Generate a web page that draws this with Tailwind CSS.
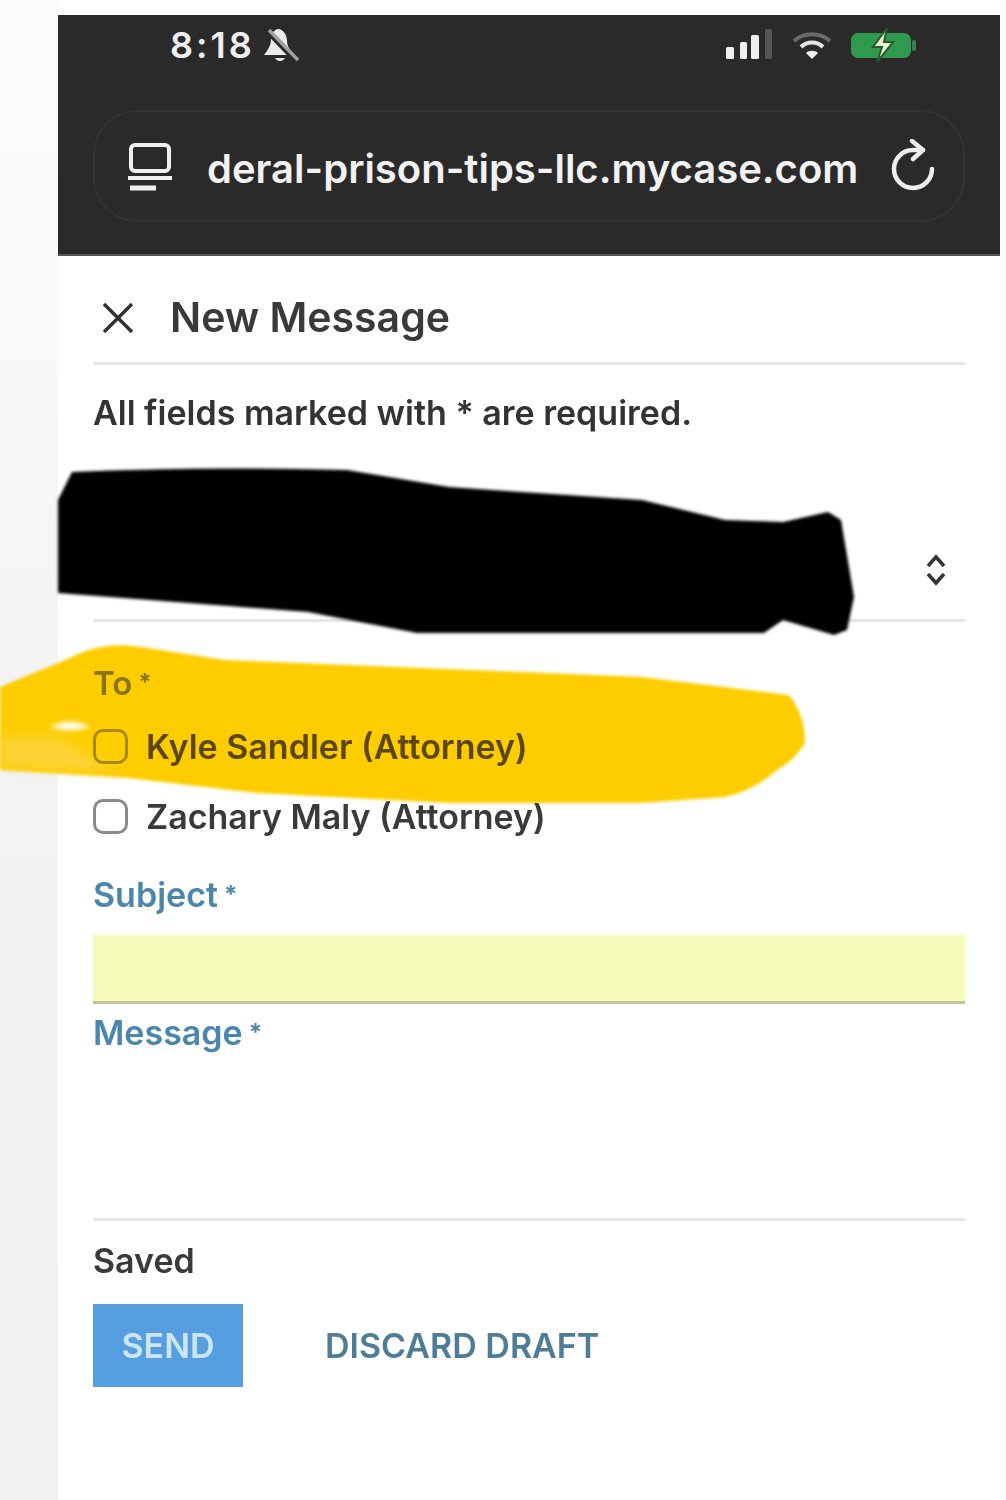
<!DOCTYPE html>
<html lang="en">
<head>
    <meta charset="UTF-8">
    <meta name="viewport" content="width=device-width, initial-scale=1.0">
    <title>New Message</title>
    <script src="https://cdn.jsdelivr.net/npm/@tailwindcss/browser@4"></script>
</head>
<body class="bg-white font-['Inter',sans-serif] overflow-hidden">
<div class="relative flex w-[1006px] h-[1500px] overflow-hidden blur-[0.7px]">
    <div class="w-[58px] shrink-0 bg-linear-to-b from-[#fcfcfc] via-[#f3f3f3] to-[#f1f1f1]"></div>

    <!-- yellow marker sits under the form text -->
    <svg class="absolute inset-0 z-0 pointer-events-none" width="1006" height="1500" viewBox="0 0 1006 1500">
        <path class="blur-[1.5px]" d="M85 651Q115 642 141 647L225 660L642 677L789 695Q805 715 805 743Q795 760 777 770Q755 790 725 797L642 803L449 803L257 793L128 778L0 770L0 687L58 663z" fill="#fdcd00"/>
        <path class="blur-[6px]" d="M58 738L118 772L0 766L0 738z" fill="#fbd75a" opacity="0.6"/>
        <path class="blur-[2px]" d="M50 727Q70 716 90 727Q70 734 50 727z" fill="#fffbe8"/>
    </svg>

    <div class="relative z-10 w-[942px] shrink-0 pt-[15px]">
        <!-- browser chrome -->
        <div class="h-[241px] bg-[#2a2a2a] px-[35px] border-b-2 border-[#555]">
            <div class="flex items-center justify-between h-[60px] pl-[77px] pr-[46px]">
                <div class="flex items-center gap-[8px]">
                    <span class="text-[36px] font-semibold tracking-[3px] text-[#efefef] leading-none">8:18</span>
                    <svg width="36" height="38" viewBox="0 0 36 38" fill="none">
                        <path d="M15 3C10 4 8 9 8 14c0 5-3 10-7 15l29 0c-3-5-6-9-6-14C24 9 20 3 15 3z" fill="#ececec"/>
                        <path d="M12 32c2 4 8 4 10 0z" fill="#ececec"/>
                        <path d="M4 5l30 31" stroke="#2a2a2a" stroke-width="5"/>
                        <path d="M6 4l29 30" stroke="#a0a0a0" stroke-width="3.5"/>
                    </svg>
                </div>
                <div class="flex items-center">
                    <svg width="48" height="32" viewBox="0 0 48 32" fill="#efefef">
                        <rect x="0" y="18" width="8" height="12" rx="1.5"/>
                        <rect x="14" y="13" width="7" height="17" rx="1.5"/>
                        <rect x="25" y="6" width="8" height="24" rx="1.5"/>
                        <rect x="39" y="0" width="7" height="30" rx="1.5" fill="#555"/>
                    </svg>
                    <svg class="ml-[17px]" width="42" height="30" viewBox="0 0 42 30" fill="none">
                        <path d="M3 11c10-9 26-9 36 0" stroke="#6a6a6a" stroke-width="4"/>
                        <path d="M10 17c6-6 16-6 22 0" stroke="#e6e6e6" stroke-width="4"/>
                        <path d="M21 29l-6-6c3-3 9-3 12 0z" fill="#efefef"/>
                    </svg>
                    <svg class="ml-[16px]" width="70" height="36" viewBox="0 0 70 36" fill="none">
                        <rect x="2" y="6" width="60" height="25" rx="7" fill="#2f9a4d"/>
                        <rect x="63" y="13" width="4" height="11" rx="2" fill="#3c7f50"/>
                        <path d="M38 1L24 20h9l-5 15 16-20h-9z" fill="#e8efd2" stroke="#26592f" stroke-width="2"/>
                    </svg>
                </div>
            </div>
            <div class="flex items-center h-[112px] mt-[35px] rounded-[44px] border-2 border-[#333] pl-[32px] pr-[26px]">
                <svg class="shrink-0 mt-[6px]" width="46" height="54" viewBox="0 0 46 54" fill="none">
                    <rect x="4" y="3" width="38" height="26" rx="4" stroke="#f0f0f0" stroke-width="4"/>
                    <path d="M1 36h44" stroke="#f0f0f0" stroke-width="4"/>
                    <path d="M3 46h26" stroke="#f0f0f0" stroke-width="5"/>
                </svg>
                <div class="ml-[34px] flex-1 pt-[5px] text-[40px] font-semibold text-[#f2f2f2] whitespace-nowrap overflow-hidden">deral-prison-tips-llc.mycase.com</div>
                <svg class="shrink-0" width="46" height="54" viewBox="0 -3 46 54" fill="none">
                    <path d="M41 27A19 19 0 1 1 22 8H32" stroke="#efefef" stroke-width="4.5" stroke-linecap="round"/>
                    <path d="M21 -1L32 8 22 17" stroke="#efefef" stroke-width="4.5" stroke-linecap="round" stroke-linejoin="round"/>
                </svg>
            </div>
        </div>

        <!-- form -->
        <div class="px-[35px]">
            <div class="flex items-center h-[109px] pt-[18px] border-b-[3px] border-[#e6e6e6]">
                <svg class="ml-[9px]" width="32" height="32" viewBox="0 0 32 32" fill="none">
                    <path d="M2 2l28 28M30 2L2 30" stroke="#333" stroke-width="3.5"/>
                </svg>
                <h1 class="ml-[36px] text-[41px] font-semibold text-[#3a3a3a]">New Message</h1>
            </div>
            <p class="h-[100px] pt-[26px] text-[34px] leading-[44px] font-semibold text-[#333] whitespace-nowrap">All fields marked with * are required.</p>

            <div class="flex items-center justify-end h-[157px] pt-[55px] pr-[17px] border-b-[3px] border-[#e6e6e6]">
                <svg width="24" height="34" viewBox="0 0 24 34" fill="none">
                    <path d="M4 13l8-9 8 9M4 21l8 9 8-9" stroke="#333" stroke-width="3.5"/>
                </svg>
            </div>

            <div class="h-[40px] mt-[41px] text-[33px] leading-[40px] text-[#8a7412] font-semibold">To<span class="ml-[6px] align-top text-[24px] font-bold">*</span></div>
            <label class="flex items-center h-[36px] mt-[25px]">
                <span class="w-[35px] h-[35px] rounded-[10px] border-[3px] border-[#a68a10]"></span>
                <span class="ml-[18px] text-[34px] font-semibold text-[#5c4708]">Kyle Sandler (Attorney)</span>
            </label>
            <label class="flex items-center h-[36px] mt-[34px]">
                <span class="w-[35px] h-[35px] rounded-[10px] border-[3px] border-[#8a8a8a]"></span>
                <span class="ml-[18px] text-[34px] font-semibold text-[#3a3a3a]">Zachary Maly (Attorney)</span>
            </label>

            <div class="h-[40px] mt-[41px] text-[34px] leading-[40px] text-[#4b86ad] font-semibold">Subject<span class="ml-[6px] align-top text-[24px] font-bold">*</span></div>
            <div class="h-[69px] mt-[20px] bg-[#f6fbb9] border-b-[3px] border-[#c2c59a]"></div>
            <div class="h-[40px] mt-[9px] text-[34px] leading-[40px] text-[#4b86ad] font-semibold">Message<span class="ml-[6px] align-top text-[24px] font-bold">*</span></div>
            <div class="h-[168px] border-b-[3px] border-[#e6e6e6]"></div>

            <div class="h-[40px] mt-[20px] text-[34px] leading-[40px] font-semibold text-[#3a3a3a]">Saved</div>
            <div class="flex items-center mt-[23px]">
                <button class="w-[150px] h-[83px] bg-[#559fe0] text-[34px] font-semibold text-[#cde5f8]">SEND</button>
                <button class="ml-[82px] text-[34px] font-semibold text-[#4f7c96] whitespace-nowrap">DISCARD DRAFT</button>
            </div>
        </div>
    </div>

    <div class="flex-1 bg-[#fbfbfb]"></div>

    <!-- black marker over the recipient select -->
    <svg class="absolute inset-0 z-20 pointer-events-none" width="1006" height="1500" viewBox="0 0 1006 1500">
        <path class="blur-[1.5px]" d="M72 472Q200 466 347 470L449 487L642 500L725 520L783 522L828 512L841 520L854 597L847 630L834 635L783 620L764 633L417 633L308 612L58 593L58 500z" fill="#000"/>
    </svg>
</div>
</body>
</html>
